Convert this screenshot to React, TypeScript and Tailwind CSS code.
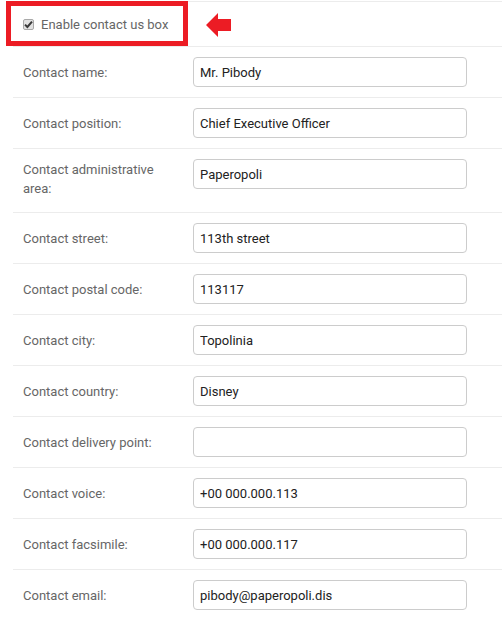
import React from "react";

const rows: { label: string; value: string; two?: boolean }[] = [
  { label: "Contact name:", value: "Mr. Pibody" },
  { label: "Contact position:", value: "Chief Executive Officer" },
  { label: "Contact administrative area:", value: "Paperopoli", two: true },
  { label: "Contact street:", value: "113th street" },
  { label: "Contact postal code:", value: "113117" },
  { label: "Contact city:", value: "Topolinia" },
  { label: "Contact country:", value: "Disney" },
  { label: "Contact delivery point:", value: "" },
  { label: "Contact voice:", value: "+00 000.000.113" },
  { label: "Contact facsimile:", value: "+00 000.000.117" },
  { label: "Contact email:", value: "pibody@paperopoli.dis" },
];

export default function App() {
  return (
    <div
      className="relative w-[502px] h-[619px] bg-white overflow-hidden pt-[1px]"
      style={{ fontFamily: "Roboto, 'Liberation Sans', sans-serif" }}
    >
      <div className="ml-[13px]">
        <div className="border-t border-[#ececec] h-[45px] flex items-center pl-[10px]">
          <span className="w-[11px] h-[11px] rounded-[2px] border border-[#a9a9a9] bg-[#e2e2e2] flex items-center justify-center">
            <svg width="9" height="9" viewBox="0 0 9 9">
              <path d="M1 4.6 L3.4 7 L8 1.6" stroke="#3a3a3a" strokeWidth="2" fill="none" />
            </svg>
          </span>
          <span className="ml-[7px] text-[13px] text-[#666] leading-none">Enable contact us box</span>
        </div>
        {rows.map((r) => (
          <div
            key={r.label}
            className="border-t border-[#ececec] flex py-[10px] pl-[10px]"
          >
            <div
              className={
                r.two
                  ? "w-[170px] pt-[1px] pb-[4px] pr-[12px] text-[13px] leading-[19px] text-[#666]"
                  : "w-[170px] pt-[7px] pr-[12px] text-[13px] leading-[18px] text-[#666]"
              }
            >
              {r.label}
            </div>
            <input
              readOnly
              value={r.value}
              className="w-[274px] h-[30px] border border-[#cccccc] rounded-[4px] px-[6px] text-[13px] text-[#222] outline-none bg-white"
            />
          </div>
        ))}
      </div>
      <div className="absolute left-[6px] top-[1px] w-[182px] h-[45px] border-[5px] border-[#ec1c24]" />
      <svg className="absolute left-[206px] top-[13px]" width="25" height="25" viewBox="0 0 25 25">
        <polygon points="0,12 12,0 12,6 25,6 25,18 12,18 12,24" fill="#ec1c24" />
      </svg>
    </div>
  );
}
